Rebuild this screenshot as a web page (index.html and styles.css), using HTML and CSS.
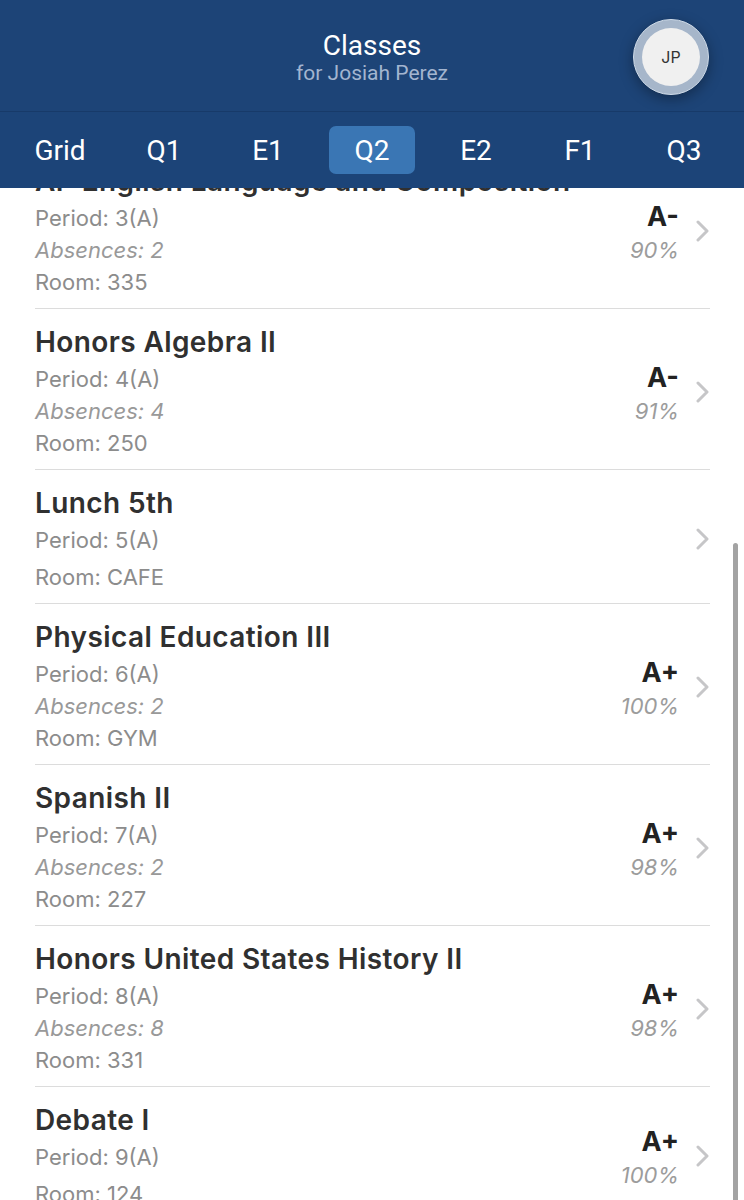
FILE: index.html
```html
<!DOCTYPE html>
<html lang="en">
<head>
    <meta charset="UTF-8">
    <meta name="viewport" content="width=device-width, initial-scale=1.0">
    <title>Classes</title>
    <link rel="stylesheet" href="styles.css">
</head>
<body>
    <div class="header">
        <div class="header-title">
            <h1>Classes</h1>
            <div class="subtitle">for Josiah Perez</div>
        </div>
        <div class="avatar"><span>JP</span></div>
    </div>
    <div class="tabs">
        <div class="tab">Grid</div>
        <div class="tab">Q1</div>
        <div class="tab">E1</div>
        <div class="tab active">Q2</div>
        <div class="tab">E2</div>
        <div class="tab">F1</div>
        <div class="tab">Q3</div>
    </div>

    <div class="list-wrap">
        <div class="list">
            <div class="row">
                <div class="info">
                    <h2>AP English Language and Composition</h2>
                    <div class="line">Period: 3(A)</div>
                    <div class="line abs">Absences: 2</div>
                    <div class="line">Room: 335</div>
                </div>
                <div class="grade"><b>A-</b><i>90%</i></div>
                <div class="chev"><svg width="14" height="22" viewBox="0 0 14 22"><path d="M2 2l9 9-9 9" fill="none" stroke="#c6c6c8" stroke-width="3" stroke-linecap="round" stroke-linejoin="round"/></svg></div>
            </div>
            <div class="row">
                <div class="info">
                    <h2>Honors Algebra II</h2>
                    <div class="line">Period: 4(A)</div>
                    <div class="line abs">Absences: 4</div>
                    <div class="line">Room: 250</div>
                </div>
                <div class="grade"><b>A-</b><i>91%</i></div>
                <div class="chev"><svg width="14" height="22" viewBox="0 0 14 22"><path d="M2 2l9 9-9 9" fill="none" stroke="#c6c6c8" stroke-width="3" stroke-linecap="round" stroke-linejoin="round"/></svg></div>
            </div>
            <div class="row short">
                <div class="info">
                    <h2>Lunch 5th</h2>
                    <div class="line">Period: 5(A)</div>
                    <div class="spacer"></div>
                    <div class="line">Room: CAFE</div>
                </div>
                <div class="grade"></div>
                <div class="chev"><svg width="14" height="22" viewBox="0 0 14 22"><path d="M2 2l9 9-9 9" fill="none" stroke="#c6c6c8" stroke-width="3" stroke-linecap="round" stroke-linejoin="round"/></svg></div>
            </div>
            <div class="row">
                <div class="info">
                    <h2>Physical Education III</h2>
                    <div class="line">Period: 6(A)</div>
                    <div class="line abs">Absences: 2</div>
                    <div class="line">Room: GYM</div>
                </div>
                <div class="grade"><b>A+</b><i>100%</i></div>
                <div class="chev"><svg width="14" height="22" viewBox="0 0 14 22"><path d="M2 2l9 9-9 9" fill="none" stroke="#c6c6c8" stroke-width="3" stroke-linecap="round" stroke-linejoin="round"/></svg></div>
            </div>
            <div class="row">
                <div class="info">
                    <h2>Spanish II</h2>
                    <div class="line">Period: 7(A)</div>
                    <div class="line abs">Absences: 2</div>
                    <div class="line">Room: 227</div>
                </div>
                <div class="grade"><b>A+</b><i>98%</i></div>
                <div class="chev"><svg width="14" height="22" viewBox="0 0 14 22"><path d="M2 2l9 9-9 9" fill="none" stroke="#c6c6c8" stroke-width="3" stroke-linecap="round" stroke-linejoin="round"/></svg></div>
            </div>
            <div class="row">
                <div class="info">
                    <h2>Honors United States History II</h2>
                    <div class="line">Period: 8(A)</div>
                    <div class="line abs">Absences: 8</div>
                    <div class="line">Room: 331</div>
                </div>
                <div class="grade"><b>A+</b><i>98%</i></div>
                <div class="chev"><svg width="14" height="22" viewBox="0 0 14 22"><path d="M2 2l9 9-9 9" fill="none" stroke="#c6c6c8" stroke-width="3" stroke-linecap="round" stroke-linejoin="round"/></svg></div>
            </div>
            <div class="row short">
                <div class="info">
                    <h2>Debate I</h2>
                    <div class="line">Period: 9(A)</div>
                    <div class="spacer"></div>
                    <div class="line">Room: 124</div>
                </div>
                <div class="grade"><b>A+</b><i>100%</i></div>
                <div class="chev"><svg width="14" height="22" viewBox="0 0 14 22"><path d="M2 2l9 9-9 9" fill="none" stroke="#c6c6c8" stroke-width="3" stroke-linecap="round" stroke-linejoin="round"/></svg></div>
            </div>
        </div>
        <div class="scrollbar"></div>
    </div>
</body>
</html>
```
FILE: styles.css
```css
body {
    font-family: Inter, Roboto, 'Liberation Sans', sans-serif;
    margin: 0;
    padding: 0;
    background-color: #fff;
    color: #2b2b2b;
    height: 1200px;
    overflow: hidden;
    display: flex;
    flex-direction: column;
}
.header {
    position: relative;
    height: 111px;
    background-color: #1d4477;
    border-bottom: 1px solid #173a69;
    display: flex;
    justify-content: center;
    align-items: center;
}
.header-title {
    text-align: center;
    margin-top: 4px;
}
.header-title h1 {
    margin: 0;
    font-family: Roboto, sans-serif;
    font-size: 28px;
    font-weight: 400;
    line-height: 30px;
    color: #fff;
}
.subtitle {
    font-family: Roboto, sans-serif;
    font-size: 21px;
    line-height: 24px;
    color: #a3b5d0;
}
.avatar {
    position: absolute;
    top: 19px;
    left: 633px;
    width: 76px;
    height: 76px;
    box-sizing: border-box;
    border-radius: 50%;
    background-color: #a6b6ca;
    border: 1px solid #cfdbe8;
    box-shadow: 0 4px 14px rgba(0, 0, 0, 0.35);
    display: flex;
    justify-content: center;
    align-items: center;
}
.avatar span {
    width: 58px;
    height: 58px;
    border-radius: 50%;
    background-color: #f0f0f0;
    display: flex;
    justify-content: center;
    align-items: center;
    font-size: 16px;
    color: #333;
}
.tabs {
    height: 76px;
    background-color: #1c4478;
    display: flex;
    align-items: center;
    padding: 0 8px;
}
.tab {
    width: 86px;
    margin: 0 9px;
    height: 48px;
    border-radius: 7px;
    display: flex;
    justify-content: center;
    align-items: center;
    font-family: Roboto, sans-serif;
    font-size: 28px;
    color: #fff;
}
.tab.active {
    background-color: #3a76b4;
}
.list-wrap {
    position: relative;
    flex: 1;
    overflow: hidden;
}
.list {
    margin-top: -40px;
    padding: 0 34px 0 35px;
}
.row {
    display: flex;
    align-items: center;
    height: 161px;
    box-sizing: border-box;
    padding: 16px 0 11px;
    border-bottom: 1px solid #dcdcdc;
}
.row.short {
    height: 134px;
}
.info {
    flex: 1;
    align-self: flex-start;
}
.info h2 {
    margin: 0 0 4px;
    font-size: 28px;
    line-height: 34px;
    font-weight: 600;
    letter-spacing: 0.4px;
    color: #303030;
    white-space: nowrap;
}
.line {
    font-size: 22px;
    line-height: 32px;
    color: #8c8c8c;
}
.line.abs {
    font-style: italic;
    color: #999;
}
.spacer {
    height: 5px;
}
.grade {
    display: flex;
    flex-direction: column;
    align-items: flex-end;
    margin-top: 4px;
}
.grade b {
    font-size: 27px;
    line-height: 34px;
    font-weight: 700;
    color: #222;
}
.grade i {
    font-size: 22px;
    line-height: 32px;
    color: #9c9c9c;
}
.chev {
    width: 14px;
    margin-left: 17px;
    display: flex;
    align-items: center;
}
.scrollbar {
    position: absolute;
    left: 733px;
    top: 355px;
    width: 5px;
    height: 700px;
    border-radius: 3px;
    background-color: #a3a3a3;
}
```
